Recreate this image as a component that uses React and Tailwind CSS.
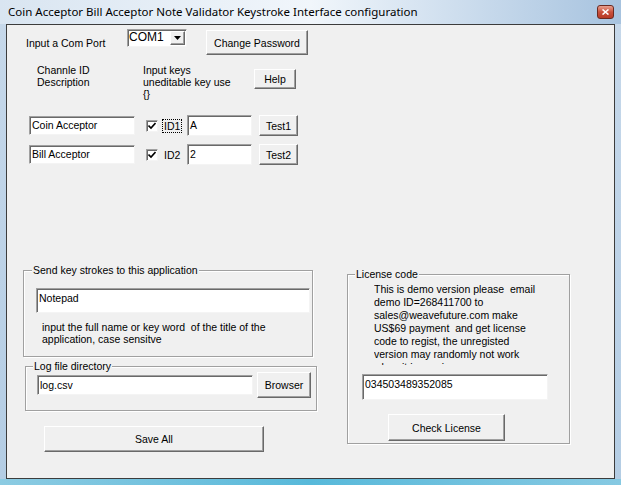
import React from 'react';

const sunken =
    'bg-white border border-t-[#a0a0a0] border-l-[#a0a0a0] border-b-[#f4f4f4] border-r-[#f4f4f4] shadow-[inset_1px_1px_0_#696969]';
const raised =
    'bg-[#f0f0f0] border border-t-white border-l-white border-b-[#696969] border-r-[#696969] shadow-[inset_-1px_-1px_0_#a0a0a0] flex items-center justify-center leading-[12px]';
const group =
    'border border-[#a0a0a0] shadow-[inset_1px_1px_0_white,1px_1px_0_white] min-w-0';

const Check = () => (
    <div className={`${sunken} w-[12px] h-[12px] flex items-center justify-center`}>
        <svg width="8" height="8" viewBox="0 0 8 8">
            <path d="M0.5 3.5 L3 6 L7.5 1" stroke="#000" strokeWidth="1.6" fill="none" />
        </svg>
    </div>
);

const ChannelRow = ({ desc, id, value, test, focus, className }) => (
    <div className={`flex items-center h-[23px] ${className}`}>
        <div className={`${sunken} ml-[22px] w-[106px] h-[19px] pl-[2px] leading-[16px]`}>{desc}</div>
        <div className="ml-[11px]">
            <Check />
        </div>
        <div
            className={`ml-[4px] w-[20px] px-[1px] leading-[12px] border border-dotted ${focus ? 'border-black' : 'border-transparent'}`}
        >
            {id}
        </div>
        <div className={`${sunken} ml-[5px] w-[65px] h-[21px] pl-[2px] pt-[2px] leading-[14px]`}>{value}</div>
        <button className={`${raised} ml-[7px] w-[39px] h-[21px]`}>{test}</button>
    </div>
);

const App = () => {
    return (
        <div className="w-[621px] h-[485px] flex flex-col bg-[#bed3e8] font-['Liberation_Sans',Arial,sans-serif] text-[10.5px] text-black overflow-hidden">
            {/* title bar */}
            <div className="h-[24px] flex items-center bg-linear-to-r from-[#d9e5f1] via-[#f1f6fb] to-[#a7c3df]">
                <span className="ml-[8px] font-['Noto_Sans',sans-serif] text-[11.5px] text-black">
                    Coin Acceptor Bill Acceptor Note Validator Keystroke Interface configuration
                </span>
                <div className="ml-auto mr-[7px] w-[17px] h-[14px] rounded-[3px] border border-[#6b2a22] bg-linear-to-b from-[#e8a090] via-[#c9503c] to-[#b73a26] flex items-center justify-center">
                    <svg width="7" height="6" viewBox="0 0 7 6">
                        <path d="M0.5 0.5 L6.5 5.5 M6.5 0.5 L0.5 5.5" stroke="white" strokeWidth="1.6" />
                    </svg>
                </div>
            </div>

            <div className="flex flex-1 bg-linear-to-b from-[#c6d8ea] to-[#b4cde4]">
                <div className="w-[6px]" />
                <div className="w-[609px] h-[455px] border border-[#3c3c3c] bg-[#f0f0f0] flex flex-col">
                    {/* com port row */}
                    <div className="flex items-start mt-[4px]">
                        <span className="ml-[19px] w-[101px] mt-[8px] leading-[13px]">Input a Com Port</span>
                        <div className={`${sunken} w-[60px] h-[18px] flex`}>
                            <span className="flex-1 pl-[1px] text-[12px] leading-[15px]">COM1</span>
                            <div className={`${raised} w-[15px] my-[1px] mr-[1px]`}>
                                <svg width="7" height="4" viewBox="0 0 7 4">
                                    <path d="M0 0 H7 L3.5 4 Z" fill="#000" />
                                </svg>
                            </div>
                        </div>
                        <button className={`${raised} ml-[19px] w-[102px] h-[25px] mt-[1px]`}>Change Password</button>
                    </div>

                    {/* headings */}
                    <div className="flex items-start mt-[9px]">
                        <div className="ml-[30px] w-[106px] leading-[12px]">
                            <div>Channle ID</div>
                            <div>Description</div>
                        </div>
                        <div className="w-[111px] leading-[12px]">
                            <div>Input keys</div>
                            <div>uneditable key use</div>
                            <div>{'{}'}</div>
                        </div>
                        <button className={`${raised} w-[42px] h-[20px] mt-[5px]`}>Help</button>
                    </div>

                    <ChannelRow className="mt-[14px]" desc="Coin Acceptor" id="ID1" value="A" test="Test1" focus />
                    <ChannelRow className="mt-[6px]" desc="Bill Acceptor" id="ID2" value="2" test="Test2" />

                    {/* lower section */}
                    <div className="flex items-start mt-[98px]">
                        <div className="ml-[16px] w-[294px] flex flex-col">
                            <fieldset className={`${group} w-[290px] pb-[11px]`}>
                                <legend className="ml-[8px] px-[1px] bg-[#f0f0f0] leading-[12px]">
                                    Send key strokes to this application
                                </legend>
                                <div className={`${sunken} ml-[12px] mt-[12px] w-[274px] h-[25px] pl-[2px] pt-[2px] leading-[14px]`}>
                                    Notepad
                                </div>
                                <div className="ml-[18px] mt-[8px] leading-[12px] whitespace-pre">
                                    <div>input the full name or key word  of the title of the</div>
                                    <div>application, case sensitve</div>
                                </div>
                            </fieldset>

                            <fieldset className={`${group} ml-[2px] mt-[3px] w-[292px] pb-[12px]`}>
                                <legend className="ml-[7px] px-[1px] bg-[#f0f0f0] leading-[12px]">Log file directory</legend>
                                <div className="flex items-center h-[26px]">
                                    <div className={`${sunken} ml-[11px] w-[216px] h-[20px] pl-[2px] pt-[2px] leading-[14px]`}>
                                        log.csv
                                    </div>
                                    <button className={`${raised} ml-[4px] w-[54px] h-[26px]`}>Browser</button>
                                </div>
                            </fieldset>

                            <button className={`${raised} ml-[21px] mt-[15px] w-[220px] h-[26px]`}>Save All</button>
                        </div>

                        <div className="ml-[30px] mt-[4px]">
                            <fieldset className={`${group} w-[223px] pb-[2px]`}>
                                <legend className="ml-[7px] px-[1px] bg-[#f0f0f0] leading-[12px]">License code</legend>
                                <div className="ml-[26px] mt-[3px] w-[188px] h-[82px] overflow-hidden leading-[13px] whitespace-pre">
                                    <div>This is demo version please  email</div>
                                    <div>demo ID=268411700 to</div>
                                    <div>sales@weavefuture.com make</div>
                                    <div>US$69 payment  and get license</div>
                                    <div>code to regist, the unregisted</div>
                                    <div>version may randomly not work</div>
                                    <div>when it is running</div>
                                </div>
                                <div className={`${sunken} ml-[14px] mt-[9px] w-[186px] h-[26px] pl-[2px] pt-[2px] leading-[14px]`}>
                                    034503489352085
                                </div>
                                <button className={`${raised} ml-[40px] mt-[14px] w-[117px] h-[27px]`}>Check License</button>
                            </fieldset>
                        </div>
                    </div>
                </div>
                <div className="w-[6px]" />
            </div>
            <div className="h-[6px] bg-linear-to-r from-[#8ccbe2] via-[#57b9da] to-[#86c9e2]" />
        </div>
    );
};

export default App;
